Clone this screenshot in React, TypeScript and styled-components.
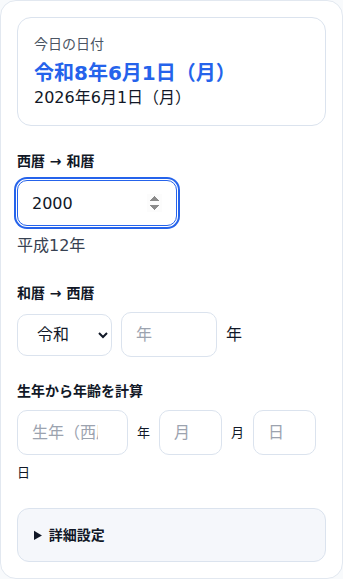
import React from "react";
import styled, { createGlobalStyle } from "styled-components";

const Global = createGlobalStyle`
  html, body { margin: 0; padding: 0; background: #f8fafc; }
  body { font-family: "DejaVu Sans", "Noto Sans CJK JP", sans-serif; color: #111827; }
  * { box-sizing: border-box; }
`;

const Card = styled.div`
  background: #fff;
  border: 1px solid #e2e8f0;
  border-radius: 16px;
  padding: 16px;
  display: flex;
  flex-direction: column;
`;

const TodayPanel = styled.div`
  border: 1px solid #dbe3ee;
  border-radius: 14px;
  padding: 16px;
  display: flex;
  flex-direction: column;
`;

const TodayLabel = styled.div`
  font-size: 14px;
  line-height: 20px;
  color: #4b5563;
  margin-bottom: 5px;
`;

const TodayWareki = styled.div`
  font-size: 20px;
  line-height: 28px;
  font-weight: 700;
  color: #2563eb;
`;

const TodaySeireki = styled.div`
  font-size: 16px;
  line-height: 22px;
  color: #111827;
`;

const Section = styled.section<{ $gap: number }>`
  margin-top: ${(p) => p.$gap}px;
  display: flex;
  flex-direction: column;
`;

const Heading = styled.h3`
  margin: 0 0 9px;
  font-size: 14px;
  line-height: 20px;
  font-weight: 700;
  color: #111827;
`;

const Row = styled.div`
  display: flex;
  flex-wrap: wrap;
  align-items: center;
  column-gap: 9px;
  row-gap: 8px;
`;

const Field = styled.input<{ $w: number; $h?: number; $focus?: boolean }>`
  width: ${(p) => p.$w}px;
  height: ${(p) => p.$h ?? 45}px;
  padding: 0 14px;
  border: 1px solid ${(p) => (p.$focus ? "#2563eb" : "#dbe3ee")};
  border-radius: 10px;
  background: #fff;
  font-family: inherit;
  font-size: 16px;
  color: #111827;
  outline: none;
  box-shadow: ${(p) => (p.$focus ? "0 0 0 1px #fff, 0 0 0 3px #2563eb" : "none")};
  &::placeholder { color: #9ca3af; }
`;

const Select = styled.select`
  width: 95px;
  height: 42px;
  padding: 0 10px 0 15px;
  border: 1px solid #dbe3ee;
  border-radius: 10px;
  background: #fff;
  font-family: inherit;
  font-size: 16px;
  color: #111827;
  outline: none;
`;

const Unit = styled.span<{ $size: number }>`
  font-size: ${(p) => p.$size}px;
  line-height: 20px;
  color: #111827;
`;

const Result = styled.div`
  margin-top: 9px;
  font-size: 16px;
  line-height: 22px;
  color: #374151;
`;

const Details = styled.details`
  margin-top: 25px;
  border: 1px solid #dbe3ee;
  border-radius: 12px;
  background: #f5f7fb;
  padding: 16px;
`;

const Summary = styled.summary`
  font-size: 14px;
  line-height: 20px;
  font-weight: 700;
  color: #111827;
  cursor: pointer;
`;

export default function App() {
  return (
    <>
      <Global />
      <Card>
        <TodayPanel>
          <TodayLabel>今日の日付</TodayLabel>
          <TodayWareki>令和8年6月1日（月）</TodayWareki>
          <TodaySeireki>2026年6月1日（月）</TodaySeireki>
        </TodayPanel>

        <Section $gap={25}>
          <Heading>西暦 → 和暦</Heading>
          <Row>
            <Field type="number" defaultValue={2000} $w={160} $h={46} $focus autoFocus />
          </Row>
          <Result>平成12年</Result>
        </Section>

        <Section $gap={26}>
          <Heading>和暦 → 西暦</Heading>
          <Row>
            <Select defaultValue="reiwa">
              <option value="reiwa">令和</option>
              <option value="heisei">平成</option>
              <option value="showa">昭和</option>
            </Select>
            <Field type="number" placeholder="年" $w={96} />
            <Unit $size={16}>年</Unit>
          </Row>
        </Section>

        <Section $gap={24}>
          <Heading>生年から年齢を計算</Heading>
          <Row>
            <Field type="number" placeholder="生年（西暦）" $w={111} />
            <Unit $size={13}>年</Unit>
            <Field type="number" placeholder="月" $w={63} />
            <Unit $size={13}>月</Unit>
            <Field type="number" placeholder="日" $w={63} />
            <Unit $size={13}>日</Unit>
          </Row>
        </Section>

        <Details>
          <Summary>詳細設定</Summary>
        </Details>
      </Card>
    </>
  );
}
